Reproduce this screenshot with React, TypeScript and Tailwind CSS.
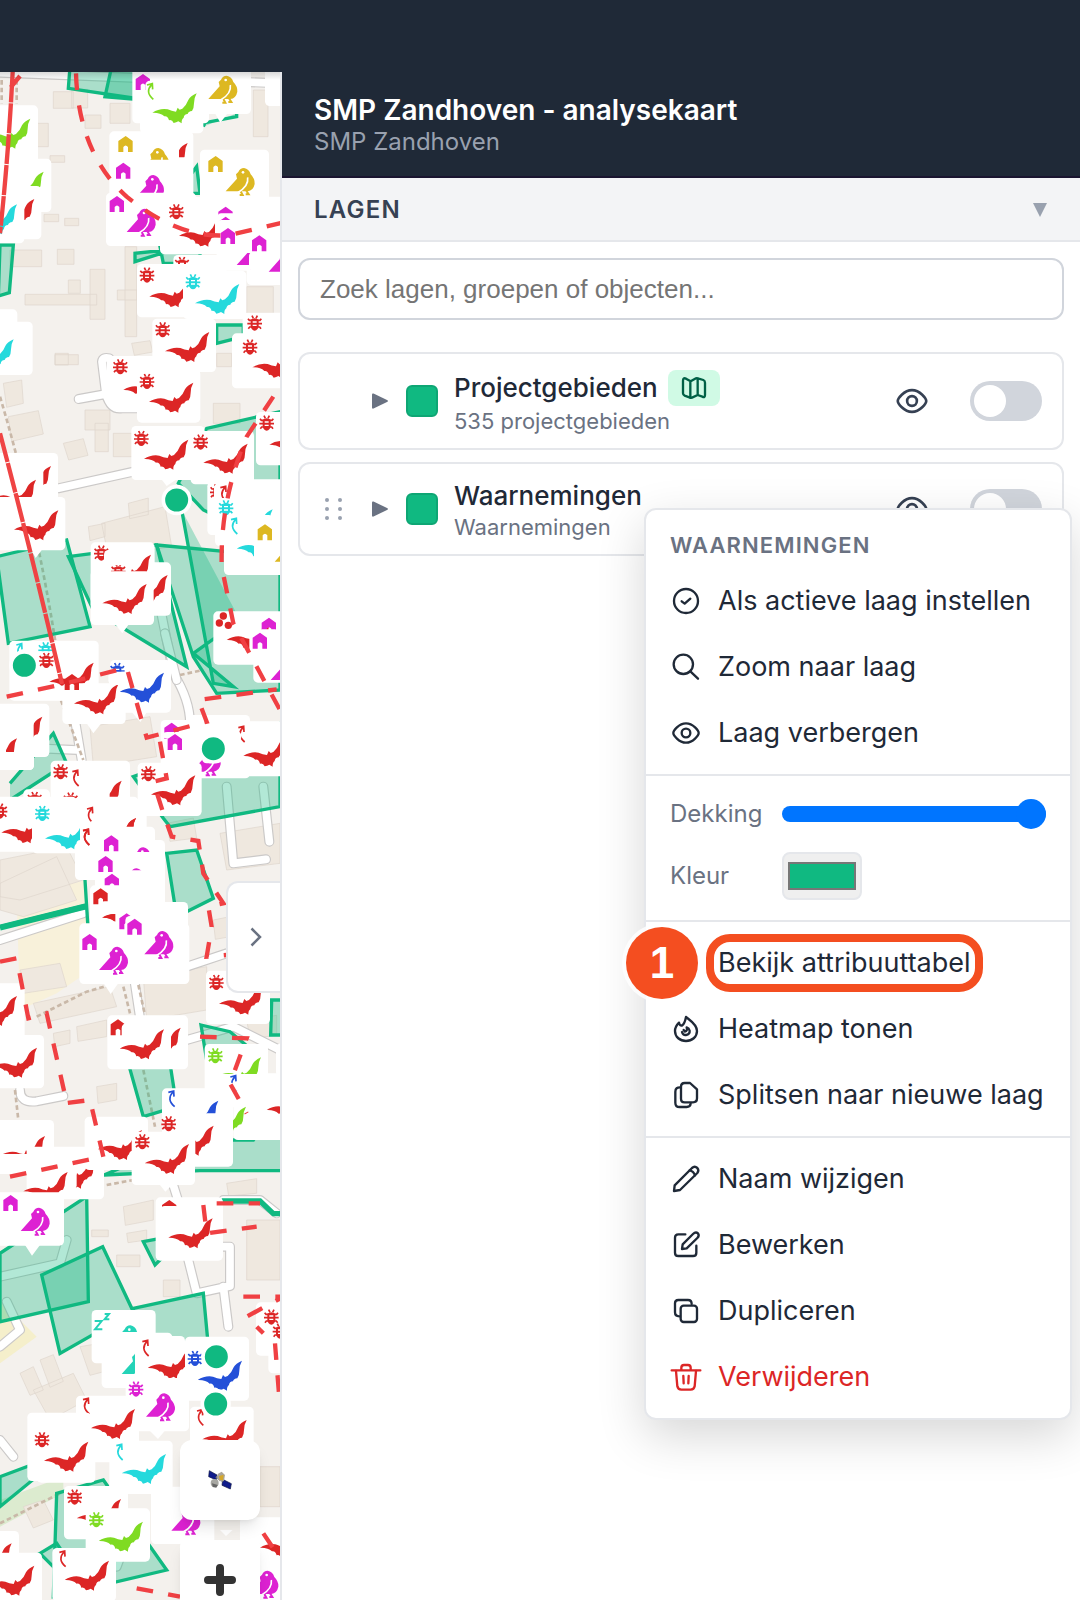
import type { ReactNode } from "react";

const R = "#dc2626";
const M = "#dd22d2";
const Y = "#ddb822";
const G = "#7fdb22";
const C = "#25d9dc";
const B = "#2450d8";
const T = "#24d3b8";

type Mark =
  | ["card", number, number, number, number]
  | ["bat" | "bird" | "bug" | "house" | "turn" | "sleep" | "dots", number, number, string]
  | ["spot", number, number];

type Tile = { y: number; marks: Mark[] };

// Map symbols, drawn at three units to the pixel and painted in order
const tiles: Tile[] = [
  {
    y: 180,
    marks: [
      ["card", 397, 20, 230, 170],
      ["card", 420, 100, 190, 120],
      ["card", 600, 20, 153, 142],
      ["card", 795, 20, 80, 118],
      ["house", 407, 42, M],
      ["card", 436, 62, 120, 90],
      ["turn", 440, 68, G],
      ["bat", 457, 100, G],
      ["bird", 625, 47, Y],
      ["card", -20, 136, 134, 175],
      ["bat", -42, 176, G],
      ["card", -20, 296, 174, 160],
      ["bat", -2, 335, G],
      ["card", -20, 310, 98, 90],
      ["card", -20, 378, 144, 160],
      ["bat", -30, 417, R],
      ["card", -20, 400, 93, 150],
      ["bat", -82, 433, C],
      ["card", 328, 214, 252, 200],
      ["bat", 430, 249, R],
      ["card", 410, 240, 127, 100],
      ["card", 520, 292, 58, 80],
      ["house", 355, 228, Y],
      ["bird", 420, 264, Y],
      ["card", 410, 299, 110, 60],
      ["house", 348, 308, M],
      ["bird", 405, 345, M],
      ["card", 600, 269, 207, 170],
      ["house", 625, 288, Y],
      ["bird", 677, 324, Y],
      ["card", 318, 398, 270, 160],
      ["card", 480, 410, 380, 173],
      ["card", 650, 432, 220, 200],
      ["card", 740, 500, 120, 175],
      ["house", 329, 408, M],
      ["bird", 380, 446, M],
      ["bug", 507, 432, R],
      ["bat", 537, 470, R],
      ["card", 645, 436, 60, 110],
      ["house", 655, 440, M],
      ["card", 650, 460, 60, 60],
      ["house", 655, 470, M],
      ["card", 650, 480, 60, 60],
      ["house", 662, 504, M],
      ["bird", 710, 545, M],
      ["card", 747, 574, 60, 60],
      ["card", 706, 535, 94, 44],
      ["house", 756, 526, M],
      ["bird", 806, 565, M],
      ["card", 802, 560, 60, 34],
      ["card", 520, 585, 160, 60],
      ["bug", 524, 590, R],
      ["card", 411, 612, 190, 160],
      ["bug", 419, 622, R],
      ["bat", 448, 652, R],
      ["card", 549, 632, 190, 145],
      ["bug", 557, 642, C],
      ["bat", 585, 672, C],
      ["card", 457, 776, 191, 160],
      ["bug", 466, 786, R],
      ["card", 728, 758, 140, 110],
      ["bug", 742, 766, R],
      ["card", 696, 820, 170, 165],
      ["bug", 728, 838, R],
      ["card", -20, 748, 72, 80],
      ["card", -20, 785, 118, 160],
      ["bat", -92, 838, C],
    ],
  },
  {
    y: 1050,
    marks: [
      ["bat", 495, -54, R],
      ["bat", 757, -6, R],
      ["card", 320, 18, 210, 150],
      ["bug", 339, 27, R],
      ["bat", 370, 62, R],
      ["card", 411, 58, 190, 160],
      ["bug", 419, 71, R],
      ["bat", 447, 98, R],
      ["card", 768, 186, 110, 160],
      ["bug", 778, 196, R],
      ["bat", 808, 226, R],
      ["card", 394, 228, 220, 162],
      ["card", 572, 243, 190, 160],
      ["bug", 402, 242, R],
      ["bat", 432, 269, R],
      ["bug", 580, 253, R],
      ["bat", 610, 281, R],
      ["card", -20, 309, 194, 180],
      ["bat", 20, 348, R],
      ["card", -10, 320, 140, 140],
      ["bat", -25, 389, R],
      ["card", -20, 441, 216, 160],
      ["bat", 42, 481, R],
      ["card", 622, 395, 240, 160],
      ["card", 645, 388, 220, 200],
      ["card", 672, 540, 190, 135],
      ["bug", 630, 402, R],
      ["card", 642, 400, 40, 56],
      ["turn", 660, 406, R],
      ["card", 650, 444, 60, 60],
      ["bat", 685, 478, C],
      ["card", 680, 495, 140, 80],
      ["card", 680, 460, 104, 60],
      ["bug", 656, 450, C],
      ["turn", 692, 502, C],
      ["bat", 710, 538, C],
      ["card", 762, 520, 90, 130],
      ["house", 773, 523, Y],
      ["bird", 824, 565, Y],
      ["card", 272, 577, 192, 200],
      ["card", 300, 637, 213, 160],
      ["card", 272, 660, 190, 165],
      ["bug", 282, 586, R],
      ["bug", 333, 640, R],
      ["bat", 320, 614, R],
      ["card", 300, 664, 150, 80],
      ["card", 312, 600, 94, 46],
      ["bat", 370, 675, R],
      ["card", 360, 670, 101, 110],
      ["bat", 307, 702, R],
      ["card", 640, 784, 230, 160],
      ["dots", 648, 790, R],
      ["bat", 680, 812, R],
      ["house", 785, 803, M],
      ["card", 748, 838, 90, 80],
      ["house", 758, 848, M],
      ["spot", 530, 450],
    ],
  },
  {
    y: 1920,
    marks: [
      ["card", 28, 2, 268, 180],
      ["turn", 48, 8, C],
      ["bug", 115, 6, C],
      ["card", 45, 34, 130, 60],
      ["bug", 117, 38, R],
      ["bat", 148, 68, R],
      ["card", 330, 60, 183, 158],
      ["card", 187, 130, 190, 122],
      ["house", 194, 102, R],
      ["bat", 222, 133, R],
      ["bug", 330, 68, B],
      ["card", 325, 95, 80, 40],
      ["bat", 359, 98, B],
      ["card", 760, 50, 110, 78],
      ["bird", 812, 50, M],
      ["card", -20, 191, 168, 160],
      ["card", -20, 300, 122, 90],
      ["bat", -6, 230, R],
      ["card", -10, 210, 111, 120],
      ["bat", -82, 295, R],
      ["card", -20, 336, 122, 54],
      ["card", -20, 290, 38, 90],
      ["card", 482, 240, 210, 168],
      ["card", 560, 225, 190, 190],
      ["card", 680, 244, 190, 165],
      ["house", 493, 248, M],
      ["card", 488, 276, 66, 20],
      ["house", 503, 282, M],
      ["bird", 575, 325, M],
      ["card", 606, 290, 40, 80],
      ["turn", 714, 256, R],
      ["card", 700, 274, 24, 30],
      ["bat", 730, 290, R],
      ["card", 152, 362, 238, 190],
      ["bug", 160, 372, R],
      ["turn", 216, 388, R],
      ["bat", 232, 422, R],
      ["card", 225, 440, 104, 70],
      ["card", 413, 368, 192, 160],
      ["bug", 423, 378, R],
      ["bat", 453, 406, R],
      ["card", 70, 448, 80, 40],
      ["bug", 82, 455, R],
      ["bug", 190, 457, R],
      ["card", -20, 470, 250, 165],
      ["card", 225, 470, 190, 250],
      ["card", 260, 490, 180, 140],
      ["bug", -22, 490, R],
      ["bat", 4, 520, R],
      ["card", 96, 480, 144, 160],
      ["bug", 105, 497, C],
      ["bat", 135, 538, C],
      ["card", 240, 500, 100, 140],
      ["turn", 260, 500, R],
      ["turn", 248, 565, R],
      ["bat", 275, 534, R],
      ["card", 290, 555, 85, 50],
      ["card", 285, 560, 180, 306],
      ["bat", 275, 534, R],
      ["card", 270, 560, 180, 90],
      ["card", 270, 540, 102, 60],
      ["card", 427, 600, 68, 230],
      ["turn", 248, 565, R],
      ["house", 312, 586, M],
      ["bird", 375, 622, M],
      ["card", 370, 636, 100, 90],
      ["bird", 355, 685, M],
      ["card", 350, 691, 100, 90],
      ["house", 295, 648, M],
      ["house", 314, 701, M],
      ["card", 270, 736, 160, 160],
      ["house", 280, 745, R],
      ["bat", 306, 775, R],
      ["card", 300, 784, 150, 34],
      ["bat", 309, 775, R],
      ["card", 346, 770, 110, 110],
      ["card", 420, 786, 144, 220],
      ["card", 238, 850, 330, 182],
      ["house", 358, 820, M],
      ["card", 376, 828, 60, 60],
      ["house", 382, 836, M],
      ["spot", 73, 76],
      ["spot", 640, 326],
    ],
  },
  {
    y: 2790,
    marks: [
      ["house", 247, 12, M],
      ["bird", 433, 3, M],
      ["bird", 297, 50, M],
      ["card", 618, 122, 192, 160],
      ["bug", 627, 134, R],
      ["bat", 657, 164, R],
      ["card", -20, 160, 94, 180],
      ["bat", -82, 198, R],
      ["card", -20, 315, 152, 160],
      ["bat", -22, 353, R],
      ["card", 322, 256, 242, 162],
      ["house", 332, 268, R],
      ["bat", 409, 293, R],
      ["card", 365, 280, 148, 110],
      ["bat", 359, 298, R],
      ["card", 614, 342, 190, 190],
      ["card", 700, 430, 170, 200],
      ["card", 828, 340, 50, 100],
      ["bug", 624, 354, G],
      ["bat", 650, 382, G],
      ["card", 640, 432, 150, 70],
      ["turn", 690, 434, B],
      ["card", 680, 458, 30, 40],
      ["bat", 605, 530, G],
      ["bat", 800, 482, R],
      ["card", 486, 475, 213, 235],
      ["bat", 522, 512, B],
      ["card", 505, 550, 160, 60],
      ["card", 490, 500, 122, 60],
      ["turn", 504, 480, B],
      ["card", -20, 570, 182, 140],
      ["bat", 2, 618, R],
      ["bug", 130, 657, R],
      ["card", -20, 672, 210, 60],
      ["card", 80, 650, 232, 158],
      ["bat", 155, 686, R],
      ["card", 150, 680, 80, 100],
      ["bat", 70, 726, R],
      ["card", -20, 787, 212, 160],
      ["card", 254, 560, 190, 160],
      ["bat", 293, 600, R],
      ["card", 395, 605, 190, 160],
      ["bug", 405, 612, R],
      ["bug", 484, 558, R],
      ["bat", 508, 587, R],
      ["card", 500, 605, 86, 90],
      ["bat", 434, 642, R],
      ["card", 467, 802, 202, 190],
      ["house", 486, 810, R],
      ["card", 480, 828, 60, 60],
      ["house", 10, 795, M],
      ["bird", 62, 833, M],
    ],
  },
  {
    y: 3660,
    marks: [
      ["bat", 505, -5, R],
      ["card", 275, 270, 192, 160],
      ["card", 305, 338, 212, 166],
      ["sleep", 280, 328, T],
      ["bird", 336, 316, T],
      ["card", 330, 336, 110, 80],
      ["bird", 365, 392, T],
      ["card", 405, 348, 150, 150],
      ["turn", 426, 358, R],
      ["bat", 443, 386, R],
      ["card", 555, 350, 192, 192],
      ["bug", 563, 392, B],
      ["bat", 593, 422, B],
      ["card", 377, 474, 190, 160],
      ["bug", 386, 484, M],
      ["bird", 438, 520, M],
      ["card", 570, 560, 191, 200],
      ["turn", 590, 566, R],
      ["bat", 607, 600, R],
      ["card", 228, 527, 160, 200],
      ["card", 300, 580, 117, 120],
      ["turn", 248, 532, R],
      ["bat", 272, 567, R],
      ["card", 82, 578, 192, 205],
      ["card", 110, 660, 176, 128],
      ["bug", 104, 636, R],
      ["bat", 132, 665, R],
      ["card", 453, 800, 190, 172],
      ["bird", 514, 862, M],
      ["card", 328, 662, 190, 160],
      ["turn", 348, 670, C],
      ["bat", 365, 702, C],
      ["card", 192, 798, 192, 160],
      ["bug", 202, 808, R],
      ["bat", 230, 837, R],
      ["card", 257, 865, 193, 160],
      ["card", 258, 830, 68, 90],
      ["bug", 267, 876, G],
      ["bat", 296, 905, G],
      ["card", -20, 933, 77, 100],
      ["bat", -98, 970, R],
      ["card", -20, 998, 146, 160],
      ["bat", -30, 1037, R],
      ["card", 157, 984, 191, 160],
      ["turn", 177, 990, R],
      ["bat", 194, 1022, R],
      ["card", 768, 247, 100, 160],
      ["card", 805, 330, 60, 130],
      ["bug", 792, 268, R],
      ["bug", 818, 310, R],
      ["card", 720, 892, 150, 250],
      ["bat", 780, 925, R],
      ["bird", 748, 1052, M],
      ["spot", 649, 410],
      ["spot", 647, 552],
    ],
  },
];

function Symbol({ mark }: { mark: Mark }) {
  if (mark[0] === "card") {
    return <rect x={mark[1]} y={mark[2]} width={mark[3]} height={mark[4]} rx={14} fill="#fff" />;
  }
  if (mark[0] === "spot") {
    return <circle cx={mark[1]} cy={mark[2]} r={40} fill="#10b981" stroke="#fff" strokeWidth={11} />;
  }
  const [kind, x, y, color] = mark;
  return (
    <g transform={`translate(${x} ${y})`} fill={color}>
      {kind === "bat" && (
        <path d="M0 58Q22 44 46 48Q58 53 71 55L76 43L82 49L90 46Q102 36 108 20Q114 8 133 0Q125 14 125 30Q125 44 119 53Q108 54 106 62Q95 63 94 73Q87 78 88 90L78 84Q72 88 64 89Q59 78 50 81Q46 67 36 69Q24 57 0 58Z" />
      )}
      {kind === "bird" && (
        <>
          <path d="M31 19L38 12Q43 0 55 0Q70 2 75 19Q88 32 87 48Q83 68 66 70H0L34 32Z" />
          <path d="M44 68L51 81H42M62 68L69 79H60" fill="none" stroke={color} strokeWidth={6} />
          <path d="M66 28Q70 54 36 74" fill="none" stroke="#fff" strokeWidth={5} />
          <circle cx={52} cy={13} r={4} fill="#fff" />
        </>
      )}
      {kind === "bug" && (
        <>
          <path d="M10 13Q22 4 34 13V33Q32 45 22 46Q12 45 10 33Z" />
          <path
            d="M14 1L18 9M30 1L26 9M2 10L6 15H38L42 10M0 25H44M3 40L7 35H37L41 40"
            fill="none"
            stroke={color}
            strokeWidth={5}
          />
          <path d="M16 20H28M16 30H28" stroke="#fff" strokeWidth={4} />
        </>
      )}
      {kind === "house" && <path d="M22 0L43 15V48H29V33Q22 24 15 33V48H0V15Z" />}
      {kind === "turn" && (
        <path d="M20 50Q-6 28 15 6M1 7L17 3L18 20" fill="none" stroke={color} strokeWidth={5} />
      )}
      {kind === "sleep" && (
        <path d="M4 -25H25L5 0H27M34 -46H47L34 -30H48" fill="none" stroke={color} strokeWidth={6} />
      )}
      {kind === "dots" && (
        <>
          <circle cx={22} cy={8} r={11} />
          <circle cx={10} cy={29} r={11} />
          <circle cx={37} cy={36} r={11} />
        </>
      )}
    </g>
  );
}

const buildings =
  "M85 85h34v22h-34zM160 275h60v50h-60zM215 268h48v56h-48zM255 345h48v40h-48zM330 310h60v60h-60zM110 370h35v70h-35zM150 467h44v20h-44zM132 643h44v22h-44zM194 655h42v22h-42zM172 748h50v45h-50zM30 750h95v50h-95zM75 883h215v32h-215zM205 840h36v40h-36zM270 808h45v150h-45zM375 740h35v270h-35zM352 870h60v30h-60zM395 1030l55-8 8 34-55 10zM165 1064h70v30h-70zM760 270h44v140h-44zM740 860h80v80h-80z" +
  "M10 1150l55-10 5 70-50 12zM25 1250l90-18 15 70-95 22zM190 1330l60-14 14 50-58 14zM255 1230h75v60h-75zM285 1270h40v85h-40zM340 1300h60v70h-60zM165 1060h40v35h-40zM265 1580l50-10v40l-45 12zM305 1570l190-50 20 120-190 30zM640 1210h80v60h-80zM650 1060h45v40h-45zM385 1510l60-16v50l-56 12z" +
  "M0 2650l170-80 60 130-160 50-70-20zM270 2180l180-30 20 120-190 30zM500 2470l80-16 10 60-80 10zM660 2500l180-30v120l-160 20zM640 2760l40-8v60l-34 6zM0 2580l200-40 50 100-190 60-60-10zM60 2910l120-20 20 70-130 20zM430 2930l190-30v130l-180 30zM100 3010l230-50 20 60-230 50zM160 3100l50-10v40l-46 10zM230 3080l90-20v50l-86 14zM290 3260l60-10v50l-56 10zM740 3060l90-14v60l-80 10z" +
  "M370 3620l90-20v60l-84 16zM680 3550l90-14v44l-84 8zM380 3700l60-10v30l-56 8zM275 3690h50v20h-50zM350 3765h70v35h-70zM490 3840h50v50h-50zM740 3660h100v180h-100zM60 4120l40-20 30 70-40 16zM120 4080l40-16 30 80-40 18zM100 4170l120-50 40 80-110 60zM240 4040l60-10 30 80-60 16zM70 4520l60-20 30 60-60 24zM560 4600h80v60h-80zM780 4400h60v120h-60z";

const roads = [
  "M0 218L840 250",
  "M236 1197L318 1182L306 1085Q308 1070 328 1075M318 1182Q332 1230 365 1225L420 1225",
  "M175 1465L400 1415",
  "M480 1820L520 2020Q570 2100 570 2170",
  "M495 1900L530 2040M220 2130L245 2280M0 2240L230 2250",
  "M680 2360L700 2590L798 2578M790 2360L808 2525",
  "M0 2820L250 2740M560 2900L680 2860M400 2920L430 3120M560 3120L700 3080L840 3150",
  "M60 3270Q60 3310 110 3304L190 3288M515 3540L540 3620",
  "M670 3600H780L830 3640M565 3780L590 3880L690 3858L690 3740L640 3740M670 3860L685 3980",
  "M0 4040L60 3990L20 3905M0 4320L40 4370M350 4700L380 4620M200 3720L180 3790L0 3830",
];

const areas = [
  "M210 200L205 265L440 300L430 200Z",
  "M335 200L315 290L430 300V200Z",
  "M0 735L40 735L28 878L-5 888Z",
  "M530 580L590 500L600 580Z",
  "M405 760V785L500 755L480 740L490 790H600V740Z",
  "M610 380L615 368L710 350V340",
  "M650 975H730V1010L650 1030Z",
  "M535 1450L620 1285L840 1235V1640L610 1530Z",
  "M-10 1670L200 1620L270 1880L25 1930Z",
  "M205 1670L470 1635L560 2000L280 1830Z",
  "M470 1635L840 1670V2070L650 2080L580 1970Z",
  "M545 1530L640 2050L700 2060L580 1960L720 1860",
  "M30 2350L160 2200L200 2290L30 2400",
  "M490 2455L400 2330L840 2170V2420L510 2480Z",
  "M500 2560L590 2550L640 2695L530 2750Z",
  "M255 2640L265 2800M0 2780L260 2715",
  "M385 3190L430 3350L530 3320L510 3190Z",
  "M603 3075L690 3095L780 3170L620 3180Z",
  "M815 3000H850V3105H812Z",
  "M312 3525L600 3512H850V3390H780L760 3420H560Z",
  "M0 3760L260 3590L265 3905L0 3965Z",
  "M125 3825L308 3740L400 3935L180 4060Z",
  "M400 3925L610 3880L640 4200L400 4100Z",
  "M430 3725L560 3700L465 3795Z",
  "M0 4430L160 4370L110 4430L0 4520Z",
  "M170 4480L310 4440L500 4710L160 4790Z",
  "M120 4660L170 4630L210 4690L180 4720Z",
];

const tracks = [
  "M5 240V310M50 240V310",
  "M0 1190Q110 1560 170 1950",
  "M175 2080L250 2280",
  "M110 3050L260 2975L330 2955M370 2960L390 3040M415 2955L435 3045",
  "M430 3210L465 3380M45 3270L55 3360M320 3555L400 3540",
  "M0 4570L180 4480M540 2025L610 2010",
];

const borders = [
  "M228 220Q235 460 380 590Q540 720 690 705L860 665",
  "M20 2090L190 2052L380 2003L440 2213L620 2165L595 2100L830 2068",
  "M820 1190L740 1310Q660 1500 665 1700L700 1870L840 2130",
  "M480 2225L500 2335L460 2345L490 2440L515 2510L595 2523L610 2620L670 2710L625 2720L635 2780L620 2870L680 2865",
  "M0 2885L50 2875L85 3055L140 3040L195 3285L195 3310L270 3300L310 3470",
  "M30 3530L285 3475M600 3110L740 3115L690 3250L740 3340",
  "M610 3615L620 3700L770 3680M650 3610H780M730 3890H850L740 3950L790 4000",
  "M825 4030L840 4220M410 4765L540 4790M790 4600L830 4660",
];

function MapCanvas() {
  return (
    <svg
      viewBox="0 216 840 4584"
      preserveAspectRatio="xMinYMin slice"
      className="block h-full w-full"
      role="img"
      aria-label="Kaart"
    >
      <path d="M0 0H840V4900H0Z" fill="#f4f1ed" />
      <path d="M50 2690L260 2640V2860L330 2870L170 2980L60 3030Z" fill="#f8f1da" />
      <path d="M0 3900L110 4010L0 4090Z" fill="#f5efcb" />
      <path d="M0 4500L190 4430V4480L0 4580Z" fill="#dcebcf" />
      <path d={buildings} fill="#efe8df" stroke="#ded5cb" strokeWidth={2} />
      {roads.map((d) => (
        <g key={d} fill="none" strokeLinecap="round" strokeLinejoin="round">
          <path d={d} stroke="#cbc9c8" strokeWidth={30} />
          <path d={d} stroke="#fff" strokeWidth={23} />
        </g>
      ))}
      {tracks.map((d) => (
        <path key={d} d={d} fill="none" stroke="#c9b8a8" strokeWidth={8} strokeDasharray="14 9" />
      ))}
      {areas.map((d) => (
        <path key={d} d={d} fill="#10b981" fillOpacity={0.32} stroke="#10b981" strokeWidth={10} />
      ))}
      <path d="M0 2783L262 2718" stroke="#10b981" strokeWidth={18} />
      <path d="M665 3603H780L820 3641H845" fill="none" stroke="#10b981" strokeWidth={16} />
      {tiles.map((tile) => (
        <g key={tile.y} transform={`translate(0 ${tile.y})`}>
          {tile.marks.map((mark, i) => (
            <Symbol key={i} mark={mark} />
          ))}
        </g>
      ))}
      <path
        d="M645 340l16 28 22-28zM480 3555l16 20 20-20zM75 3735l21 32 24-32zM310 2948l22 34 24-34zM450 4293l24 24 20-24zM660 4590l18 18 20-18zM260 2170l20 30 24-30zM395 2136l26 30 20-30zM345 1872l22 28 20-28zM92 1648l15 26 20-26zM484 1438l16 20 30-20z"
        fill="#fff"
      />
      <path
        d="M38 216Q25 470 0 700M60 228L32 262M0 1300Q90 1640 186 2052"
        fill="none"
        stroke="#ef4444"
        strokeWidth={13}
        strokeDasharray="90 3"
      />
      {borders.map((d) => (
        <path key={d} d={d} fill="none" stroke="#f04043" strokeWidth={13} strokeDasharray="50 46" />
      ))}
    </svg>
  );
}

function Glyph({ children, className = "h-8 w-8" }: { children: ReactNode; className?: string }) {
  return (
    <svg
      viewBox="0 0 96 96"
      fill="none"
      stroke="currentColor"
      strokeWidth={7}
      strokeLinecap="round"
      strokeLinejoin="round"
      className={`shrink-0 ${className}`}
      aria-hidden="true"
    >
      {children}
    </svg>
  );
}

const eye = (
  <>
    <path d="M10 48C10 42 26 19 48 19S86 42 86 48S70 77 48 77S10 54 10 48Z" />
    <circle cx={48} cy={48} r={13} />
  </>
);

const glyphs = {
  check: (
    <>
      <circle cx={48} cy={48} r={36} />
      <path d="M35 49L44 56L61 41" />
    </>
  ),
  search: (
    <>
      <circle cx={40} cy={40} r={29} />
      <path d="M61 61L84 83" />
    </>
  ),
  eye,
  fire: (
    <>
      <path d="M48 12C60 22 81 34 81 54C81 72 66 84 48 84S15 72 15 54C15 44 20 36 27 29C28 36 32 39 37 37C44 32 46 22 48 12Z" />
      <path d="M36 57Q39 67 48 66Q60 64 59 53Q57 45 50 43Q53 55 45 56L41 51" />
    </>
  ),
  pages: (
    <>
      <path d="M44 12H60L81 31V58Q81 70 69 70H44Q33 70 33 59V23Q33 12 44 12Z" />
      <path d="M32 25Q16 24 16 38V71Q16 84 29 84H50Q61 84 62 74" />
    </>
  ),
  pencil: (
    <>
      <path d="M12 84L14 67L66 15Q74 8 82 15Q88 22 82 30L30 81Z" />
      <path d="M59 22Q70 24 75 37" />
    </>
  ),
  edit: (
    <>
      <path d="M46 16H25Q15 16 15 26V71Q15 81 25 81H69Q79 81 79 71V50" />
      <path d="M36 60L38 46L69 15Q77 7 84 13Q89 20 82 27L50 58Z" />
    </>
  ),
  copy: (
    <>
      <rect x={32} y={32} width={49} height={49} rx={9} />
      <path d="M28 64Q15 64 15 52V25Q15 15 25 15H54Q65 15 65 27" />
    </>
  ),
  trash: (
    <>
      <path d="M5 28H91M34 26V20Q34 12 42 12H54Q62 12 62 20V26" />
      <path d="M18 30L22 76Q24 86 34 86H62Q72 86 74 76L78 30M40 45L41 67M56 45L55 67" />
    </>
  ),
};

type MenuEntry = { label: string; icon?: keyof typeof glyphs; danger?: boolean };

const viewActions: MenuEntry[] = [
  { label: "Als actieve laag instellen", icon: "check" },
  { label: "Zoom naar laag", icon: "search" },
  { label: "Laag verbergen", icon: "eye" },
];

const dataActions: MenuEntry[] = [
  { label: "Bekijk attribuuttabel" },
  { label: "Heatmap tonen", icon: "fire" },
  { label: "Splitsen naar nieuwe laag", icon: "pages" },
];

const editActions: MenuEntry[] = [
  { label: "Naam wijzigen", icon: "pencil" },
  { label: "Bewerken", icon: "edit" },
  { label: "Dupliceren", icon: "copy" },
  { label: "Verwijderen", icon: "trash", danger: true },
];

function MenuItems({ items }: { items: MenuEntry[] }) {
  return items.map((item) => (
    <button
      key={item.label}
      type="button"
      className={`flex h-[66px] w-full items-center gap-4 px-6 text-left text-[27px] leading-9 whitespace-nowrap ${
        item.danger ? "text-[#dc2626]" : "text-[#1f2937]"
      }`}
    >
      {item.icon ? (
        <Glyph>{glyphs[item.icon]}</Glyph>
      ) : (
        <span className="relative h-8 w-8 shrink-0">
          <span className="absolute top-1/2 right-1 flex h-[72px] w-[72px] -translate-y-1/2 items-center justify-center rounded-full bg-[#f44e20] font-['Liberation_Sans',sans-serif] text-[44px] font-bold text-white ring-4 ring-white/80">
            1
          </span>
        </span>
      )}
      {item.icon ? (
        item.label
      ) : (
        <span className="relative">
          {item.label}
          <span className="absolute -inset-x-3 -inset-y-[11px] rounded-3xl border-8 border-[#f44e20]" />
        </span>
      )}
    </button>
  ));
}

function LayerMenu() {
  return (
    <div className="absolute top-[46px] -right-2 z-10 w-[428px] rounded-xl border-2 border-gray-200 bg-white shadow-[0_16px_48px_rgba(0,0,0,0.16)]">
      <div className="border-b-2 border-gray-200 pb-2">
        <h2 className="px-6 pt-5 pb-2 text-[22px] leading-[30px] font-semibold tracking-[0.05em] text-gray-500 uppercase">
          Waarnemingen
        </h2>
        <MenuItems items={viewActions} />
      </div>
      <div className="border-b-2 border-gray-200 px-6 pt-2 pb-5 text-[24px] text-gray-500">
        <div className="flex h-[60px] items-center">
          <label htmlFor="opacity" className="w-28">
            Dekking
          </label>
          <input
            id="opacity"
            type="range"
            min={0}
            max={100}
            defaultValue={100}
            className="h-4 min-w-0 flex-1 appearance-none rounded-full bg-[#0075ff] [&::-webkit-slider-thumb]:h-[30px] [&::-webkit-slider-thumb]:w-[30px] [&::-webkit-slider-thumb]:appearance-none [&::-webkit-slider-thumb]:rounded-full [&::-webkit-slider-thumb]:bg-[#0075ff]"
          />
        </div>
        <div className="flex h-14 items-end">
          <label htmlFor="color" className="w-28 leading-[48px]">
            Kleur
          </label>
          <input
            id="color"
            type="color"
            defaultValue="#10b981"
            className="h-12 w-20 appearance-none rounded-lg border-2 border-gray-200 bg-[#efefef] px-1 py-2 [&::-webkit-color-swatch]:rounded-none [&::-webkit-color-swatch]:border-2 [&::-webkit-color-swatch]:border-[#777] [&::-webkit-color-swatch-wrapper]:p-0"
          />
        </div>
      </div>
      <div className="border-b-2 border-gray-200 py-2">
        <MenuItems items={dataActions} />
      </div>
      <div className="py-2">
        <MenuItems items={editActions} />
      </div>
    </div>
  );
}

type LayerCardProps = { name: string; detail: string; badge?: boolean; draggable?: boolean };

function LayerCard({ name, detail, badge, draggable }: LayerCardProps) {
  return (
    <article className="flex items-center rounded-xl border-2 border-gray-200 bg-white py-3.5 pr-5 pl-6">
      <div className="w-12">
        {draggable && (
          <svg viewBox="0 0 18 24" className="h-6 w-[18px] fill-gray-400" aria-hidden="true">
            {[3, 12, 21].map((y) => (
              <g key={y}>
                <circle cx={3} cy={y} r={2} />
                <circle cx={16} cy={y} r={2} />
              </g>
            ))}
          </svg>
        )}
      </div>
      <button type="button" aria-label="Uitklappen" className="w-[34px]">
        <svg viewBox="0 0 16 16" className="h-4 w-4 fill-gray-500">
          <path d="M0 1.5Q0 0 1.5 .5L15 7Q17 8 15 9L1.5 15.5Q0 16 0 14.5Z" />
        </svg>
      </button>
      <span className="h-8 w-8 shrink-0 rounded-md border-2 border-[#0ea674] bg-[#10b981]" />
      <div className="ml-4 flex-1">
        <div className={`flex items-center gap-2.5 ${badge ? "h-10" : "h-9"}`}>
          <h3 className="text-[26px] leading-9 font-medium text-[#1f2937]">{name}</h3>
          {badge && (
            <span className="flex h-9 w-[52px] items-center justify-center rounded-lg bg-emerald-100 text-emerald-800">
              <Glyph>
                <path d="M15 26Q15 16 24 20L38 28L54 19Q58 18 62 20L76 24Q81 26 81 32V69Q81 78 73 74L59 69L42 77Q38 78 34 76L20 71Q15 69 15 64ZM37 28V76M59 20V68" />
              </Glyph>
            </span>
          )}
        </div>
        <p className="text-[22px] leading-[26px] text-gray-500">{detail}</p>
      </div>
      <button type="button" aria-label={`${name} tonen`} className="mr-10 text-gray-700">
        <Glyph className="h-9 w-9">{eye}</Glyph>
      </button>
      <input
        type="checkbox"
        role="switch"
        aria-label={name}
        className="h-10 w-[72px] appearance-none rounded-full bg-gray-300 p-1 before:block before:h-8 before:w-8 before:rounded-full before:bg-white"
      />
    </article>
  );
}

function Satellite() {
  return (
    <svg viewBox="0 0 72 60" className="h-5 w-6" aria-hidden="true">
      <path d="M4 2L27 15L25 30L2 20Z" fill="#101c8c" stroke="#071040" strokeWidth={2} />
      <path d="M44 28L70 41L67 57L42 46Z" fill="#101c8c" stroke="#071040" strokeWidth={2} />
      <path d="M24 20L46 34" stroke="#777" strokeWidth={7} />
      <path d="M29 12L41 5L51 15L48 32L35 34L27 25Z" fill="#aaa59a" />
      <path d="M33 18L47 14L45 31L35 29Z" fill="#d4a72c" />
      <circle cx={20} cy={39} r={12} fill="#a7a7a2" />
      <path d="M12 40L29 45L25 53L14 51Z" fill="#666" />
    </svg>
  );
}

export default function App() {
  return (
    <div className="flex min-h-screen flex-col bg-white font-[Inter,sans-serif]">
      <header className="h-[72px] shrink-0 bg-[#1f2937]" />
      <main className="flex flex-1">
        <section className="relative w-[282px] shrink-0 overflow-hidden border-r-2 border-gray-200">
          <MapCanvas />
          <div className="absolute inset-x-0 top-0 h-2 bg-linear-to-b from-black/15 to-transparent" />
          <button
            type="button"
            aria-label="Paneel inklappen"
            className="absolute top-[809px] right-0 flex h-28 w-[54px] items-center justify-center rounded-l-xl border-2 border-r-0 border-gray-200 bg-white pl-1 text-gray-500"
          >
            <svg viewBox="0 0 12 20" className="h-5 w-3" fill="none" stroke="currentColor" strokeWidth={2.5}>
              <path d="M1.5 1.5L10 10L1.5 18.5" />
            </svg>
          </button>
          <div className="absolute right-5 -bottom-5 flex flex-col gap-5">
            <button
              type="button"
              aria-label="Satelliet"
              className="flex h-20 w-20 items-center justify-center rounded-xl bg-white shadow-lg"
            >
              <Satellite />
            </button>
            <button
              type="button"
              aria-label="Inzoomen"
              className="flex h-20 w-20 items-center justify-center rounded-md bg-white shadow-lg"
            >
              <svg viewBox="0 0 32 32" className="h-8 w-8" stroke="#333" strokeWidth={8} strokeLinecap="round">
                <path d="M4 16H28M16 4V28" />
              </svg>
            </button>
          </div>
        </section>

        <aside className="min-w-0 flex-1">
          <div className="border-b-2 border-[#1a1530] bg-[#1f2937] px-8 pt-[22px] pb-[18px]">
            <h1 className="text-[28px] leading-8 font-semibold text-white">SMP Zandhoven - analysekaart</h1>
            <p className="text-[24px] leading-8 text-gray-400">SMP Zandhoven</p>
          </div>
          <button
            type="button"
            className="flex h-16 w-full items-center justify-between border-b-2 border-gray-200 bg-gray-100 px-8 pt-0.5 text-[24px] font-semibold tracking-[0.05em] text-gray-700"
          >
            LAGEN
            <svg viewBox="0 0 16 14" className="h-3.5 w-4 fill-gray-400" aria-hidden="true">
              <path d="M1 0H15L8 14Z" />
            </svg>
          </button>
          <div className="p-4">
            <input
              type="search"
              aria-label="Zoek lagen"
              placeholder="Zoek lagen, groepen of objecten..."
              className="block h-[62px] w-full rounded-xl border-2 border-gray-300 px-5 font-['Liberation_Sans',sans-serif] text-[26px] placeholder:text-[#757575]"
            />
            <div className="mt-8 space-y-3">
              <LayerCard name="Projectgebieden" detail="535 projectgebieden" badge />
              <div className="relative">
                <LayerCard name="Waarnemingen" detail="Waarnemingen" draggable />
                <LayerMenu />
              </div>
            </div>
          </div>
        </aside>
      </main>
    </div>
  );
}
